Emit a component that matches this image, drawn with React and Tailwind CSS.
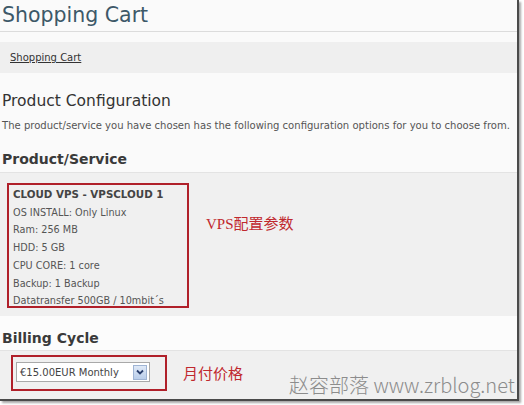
export default function App() {
  const lines = [
    "OS INSTALL: Only Linux",
    "Ram: 256 MB",
    "HDD: 5 GB",
    "CPU CORE: 1 core",
    "Backup: 1 Backup",
    "Datatransfer 500GB / 10mbit´s",
  ];
  return (
    <div className="w-[524px] h-[405px] bg-white overflow-hidden">
      <div
        className="relative w-[519px] h-[401px] bg-[#fafafa] border-r-2 border-b-2 border-[#4a4a4a] shadow-[2px_2px_2px_rgba(0,0,0,0.35)] overflow-hidden"
        style={{ fontFamily: '"DejaVu Sans", Verdana, sans-serif' }}
      >
        <div className="h-[32px] border-b border-[#dcdcdc] pl-[2px] text-[20.5px] leading-[30px] text-[#3d5868]">
          Shopping Cart
        </div>
        <div className="mt-[10px] h-[31px] bg-[#efefef] pl-[10px] flex items-center text-[10px] text-[#333]">
          <span className="underline">Shopping Cart</span>
        </div>
        <div className="mt-[17px] pl-[2px] h-[22px] text-[15.5px] leading-[22px] text-[#333]">
          Product Configuration
        </div>
        <div className="mt-[7px] pl-[2px] h-[14px] text-[10.05px] leading-[14px] text-[#555] whitespace-nowrap">
          The product/service you have chosen has the following configuration options for you to choose from.
        </div>
        <div className="mt-[15px] pl-[2px] h-[22px] text-[14px] leading-[22px] font-bold text-[#3a3a3a]">
          Product/Service
        </div>
        <div className="mt-[2px] h-[144px] bg-[#f0f0f0] border-t border-[#e3e3e3] pt-[10px] pl-[7px] flex items-start">
          <div className="w-[182px] h-[125px] border-2 border-[#b0202a] pl-[4px] pt-[1px] text-[9.7px] leading-[17.7px] text-[#555]">
            <div className="font-bold text-[10.3px] text-[#444]">CLOUD VPS - VPSCLOUD 1</div>
            {lines.map((l) => (
              <div key={l}>{l}</div>
            ))}
          </div>
          <div
            className="ml-[17px] mt-[31px] text-[15px] leading-[20px] text-[#c0282e]"
            style={{ fontFamily: '"Liberation Serif", "Noto Sans CJK SC", serif' }}
          >
            VPS配置参数
          </div>
        </div>
        <div className="h-[34px] bg-[#fcfcfc] pl-[2px] pt-[11px] text-[14px] leading-[22px] font-bold text-[#3a3a3a]">
          Billing Cycle
        </div>
        <div className="h-[49px] bg-[#f0f0f0] border-t border-[#e3e3e3] pt-[4px] pl-[11px] flex items-start">
          <div className="w-[156px] h-[36px] border-2 border-[#b0202a] pl-[3px] pt-[5px]">
            <div className="w-[134px] h-[20px] bg-white border border-[#a9a9a9] flex items-center justify-between pl-[3px] pr-[2px]">
              <span className="text-[10px] text-[#444]">€15.00EUR Monthly</span>
              <span className="w-[14px] h-[15px] bg-gradient-to-b from-[#dfe9f7] to-[#b9cdea] border border-[#9fb4d4] flex items-center justify-center">
                <svg width="8" height="6" viewBox="0 0 8 6">
                  <path d="M1 1.5 L4 4.5 L7 1.5" fill="none" stroke="#2a3f6e" strokeWidth="1.8" />
                </svg>
              </span>
            </div>
          </div>
          <div
            className="ml-[16px] mt-[8px] text-[15px] leading-[20px] text-[#c0282e]"
            style={{ fontFamily: '"Noto Sans CJK SC", sans-serif' }}
          >
            月付价格
          </div>
        </div>
        <div
          className="absolute left-[289px] top-[372px] text-[20px] leading-[25px] text-[#8c8c8c] whitespace-nowrap"
          style={{ fontFamily: '"Noto Sans CJK SC", sans-serif', fontWeight: 300 }}
        >
          赵容部落 www.zrblog.net
        </div>
      </div>
    </div>
  );
}
